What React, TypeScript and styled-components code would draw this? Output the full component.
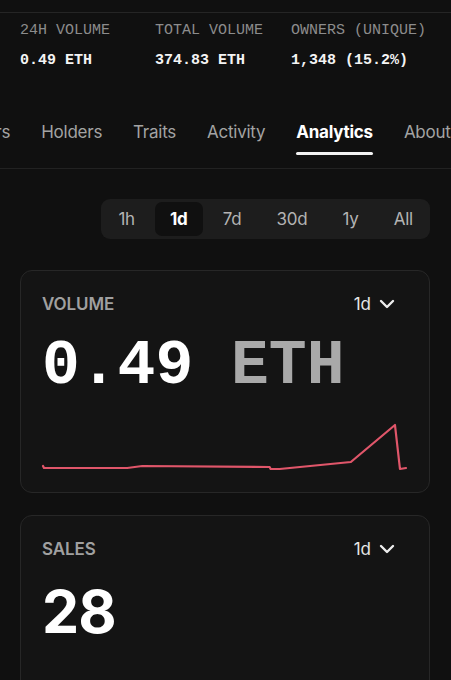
import React, { useLayoutEffect, useRef } from 'react';
import styled, { createGlobalStyle } from 'styled-components';
import { ChevronDown } from 'lucide-react';

const MONO = `"Liberation Mono", "DejaVu Sans Mono", monospace`;
const SANS = `Inter, "Noto Sans", Roboto, sans-serif`;

const GlobalStyle = createGlobalStyle`
  html, body {
    margin: 0;
    padding: 0;
    background: #101010;
    overflow: hidden;
  }
  * { box-sizing: border-box; }
`;

const stats = [
  { label: '24H VOLUME', value: '0.49 ETH' },
  { label: 'TOTAL VOLUME', value: '374.83 ETH' },
  { label: 'OWNERS (UNIQUE)', value: '1,348 (15.2%)' },
];

const tabs = ['Offers', 'Holders', 'Traits', 'Activity', 'Analytics', 'About'];
const ranges = ['1h', '1d', '7d', '30d', '1y', 'All'];

const chartPoints: [number, number][] = [
  [1, 51], [2, 53], [85, 53], [100, 51], [227, 52], [228, 54], [237, 54],
  [308, 47], [352, 10], [357, 54], [363, 53],
];

const App: React.FC = () => {
  const stripRef = useRef<HTMLDivElement>(null);
  const holdersRef = useRef<HTMLDivElement>(null);

  // the tab strip is scrolled so "Holders" sits at x=41
  useLayoutEffect(() => {
    if (stripRef.current && holdersRef.current) {
      stripRef.current.scrollLeft = holdersRef.current.offsetLeft - 41;
    }
  }, []);

  return (
    <Page>
      <GlobalStyle />
      <TopEdge />
      <StatsRow>
        {stats.map(s => (
          <Stat key={s.label}>
            <StatLabel>{s.label}</StatLabel>
            <StatValue>{s.value}</StatValue>
          </Stat>
        ))}
      </StatsRow>

      <TabBar ref={stripRef}>
        {tabs.map(t => (
          <Tab key={t} $active={t === 'Analytics'} ref={t === 'Holders' ? holdersRef : undefined}>
            {t}
          </Tab>
        ))}
      </TabBar>

      <Body>
        <RangeRow>
          <Segmented>
            {ranges.map(r => (
              <Segment key={r} $active={r === '1d'}>
                {r}
              </Segment>
            ))}
          </Segmented>
        </RangeRow>

        <Card>
          <CardHeader>
            <CardLabel>VOLUME</CardLabel>
            <PeriodPicker>
              1d
              <ChevronDown size={24} strokeWidth={2.4} />
            </PeriodPicker>
          </CardHeader>
          <BigMono>
            0.49 <Unit>ETH</Unit>
          </BigMono>
          <Chart viewBox="0 0 364 60" preserveAspectRatio="none">
            <polyline
              points={chartPoints.map(p => p.join(',')).join(' ')}
              fill="none"
              stroke="#e0566a"
              strokeWidth={2.2}
              strokeLinejoin="round"
              strokeLinecap="round"
            />
          </Chart>
        </Card>

        <Card $tall>
          <CardHeader>
            <CardLabel>SALES</CardLabel>
            <PeriodPicker>
              1d
              <ChevronDown size={24} strokeWidth={2.4} />
            </PeriodPicker>
          </CardHeader>
          <BigSans>28</BigSans>
        </Card>
      </Body>
    </Page>
  );
};

export default App;

const Page = styled.div`
  width: 451px;
  height: 680px;
  background: #101010;
  color: #f2f2f2;
  overflow: hidden;
`;

const TopEdge = styled.div`
  height: 13px;
  border-bottom: 1px solid #252525;
`;

const StatsRow = styled.div`
  display: grid;
  grid-template-columns: 135px 136px auto;
  padding: 8px 20px 0;
`;

const Stat = styled.div`
  display: flex;
  flex-direction: column;
  gap: 10px;
`;

const StatLabel = styled.div`
  font-family: ${MONO};
  font-size: 15px;
  line-height: 20px;
  color: #8c8c8c;
  white-space: nowrap;
`;

const StatValue = styled.div`
  font-family: ${MONO};
  font-size: 15px;
  line-height: 20px;
  font-weight: 700;
  color: #f4f4f4;
  white-space: nowrap;
`;

const TabBar = styled.div`
  display: flex;
  gap: 31px;
  margin-top: 49px;
  padding: 0 20px 13px;
  border-bottom: 1px solid #222;
  overflow-x: auto;
  scrollbar-width: none;
  &::-webkit-scrollbar { display: none; }
`;

const Tab = styled.div<{ $active?: boolean }>`
  display: flex;
  flex-direction: column;
  flex-shrink: 0;
  font-family: ${SANS};
  font-size: 17px;
  line-height: 24px;
  letter-spacing: -0.25px;
  font-weight: ${p => (p.$active ? 700 : 400)};
  color: ${p => (p.$active ? '#ffffff' : '#a3a3a3')};
  white-space: nowrap;

  &::after {
    content: '';
    display: block;
    height: 3px;
    margin-top: 8px;
    border-radius: 2px;
    background: ${p => (p.$active ? '#f2f2f2' : 'transparent')};
  }
`;

const Body = styled.div`
  display: flex;
  flex-direction: column;
  padding: 30px 21px 0 20px;
`;

const RangeRow = styled.div`
  display: flex;
  justify-content: flex-end;
`;

const Segmented = styled.div`
  display: flex;
  align-items: center;
  gap: 5px;
  height: 40px;
  padding: 3px 2px;
  border-radius: 9px;
  background: #1d1d1d;
`;

const Segment = styled.div<{ $active?: boolean }>`
  display: flex;
  align-items: center;
  justify-content: center;
  height: 34px;
  padding: 0 15px;
  border-radius: 7px;
  font-family: ${SANS};
  font-size: 17px;
  letter-spacing: -0.2px;
  font-weight: ${p => (p.$active ? 700 : 400)};
  color: ${p => (p.$active ? '#ffffff' : '#b3b3b3')};
  background: ${p => (p.$active ? '#101010' : 'transparent')};
`;

const Card = styled.div<{ $tall?: boolean }>`
  display: flex;
  flex-direction: column;
  margin-top: ${p => (p.$tall ? '22px' : '31px')};
  padding: 22px 22px 17px 21px;
  min-height: ${p => (p.$tall ? '224px' : 'auto')};
  border: 1px solid #272727;
  border-radius: 12px;
  background: #141414;
`;

const CardHeader = styled.div`
  display: flex;
  align-items: center;
  justify-content: space-between;
  height: 22px;
`;

const CardLabel = styled.div`
  font-family: ${SANS};
  font-size: 17px;
  font-weight: 600;
  color: #a0a0a0;
  letter-spacing: -0.1px;
`;

const PeriodPicker = styled.div`
  display: flex;
  align-items: center;
  margin-right: 8px;
  font-family: ${SANS};
  font-size: 17px;
  color: #e6e6e6;

  svg {
    margin-left: 4px;
    color: #ededed;
  }
`;

const BigMono = styled.div`
  margin-top: 20px;
  font-family: ${MONO};
  font-size: 63px;
  line-height: 63px;
  font-weight: 700;
  color: #ffffff;
  white-space: pre;
`;

const Unit = styled.span`
  color: #a9a9a9;
`;

const Chart = styled.svg`
  display: block;
  width: 100%;
  height: 60px;
  margin-top: 17px;
  overflow: visible;
`;

const BigSans = styled.div`
  margin-top: 22px;
  font-family: ${SANS};
  font-size: 59px;
  line-height: 59px;
  letter-spacing: -0.8px;
  font-weight: 700;
  color: #ffffff;
`;
